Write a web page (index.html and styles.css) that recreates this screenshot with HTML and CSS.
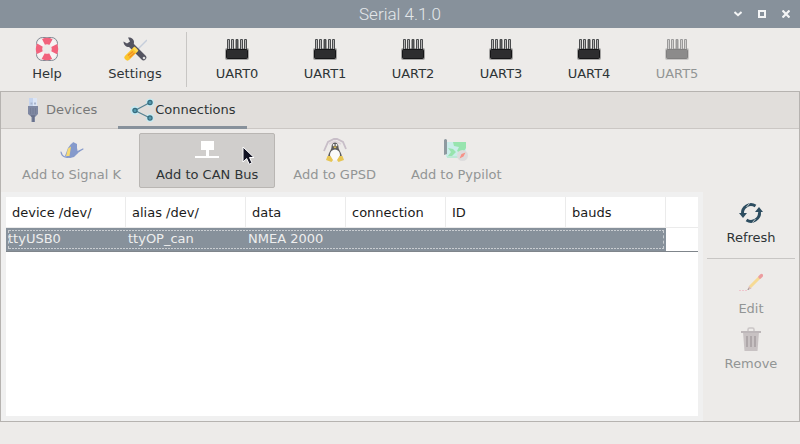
FILE: index.html
```html
<!DOCTYPE html>
<html lang="en">
<head>
<meta charset="utf-8">
<title>Serial 4.1.0</title>
<link rel="stylesheet" href="styles.css">
</head>
<body>
<svg class="defs" aria-hidden="true">
  <symbol id="uart" viewBox="0 0 24 24">
    <rect x="0" y="11" width="24" height="12" rx="2" fill="#1d1d1f" opacity=".35"/>
    <g fill="#b4b4b4" stroke="#4b4c4e" stroke-width="1">
      <path d="M2.500 13V2.500h2V13M6.500 13V2.500h2V13M15.500 13V2.500h2V13M19.500 13V2.500h2V13"/>
      <path fill="#555" d="M11 13V2.500h2V13"/>
    </g>
    <rect x="1.500" y="12.500" width="21" height="9" rx="1" fill="#2d2d2f" stroke="#151517"/>
  </symbol>
</svg>
<header class="titlebar">
  <h1>Serial 4.1.0</h1>
  <div class="window-buttons">
    <button aria-label="Minimize"><svg width="8" height="8" viewBox="0 0 8 8"><path d="M0.500 2L4 5.200L7.500 2" fill="none" stroke="#f4f5f6" stroke-width="2"/></svg></button>
    <button aria-label="Maximize"><svg width="8" height="8" viewBox="0 0 8 8"><path d="M1 1h6v6H1z" fill="none" stroke="#f4f5f6" stroke-width="2"/></svg></button>
    <button aria-label="Close"><svg width="8" height="8" viewBox="0 0 8 8"><path d="M.5.5l7 7M7.500.5l-7 7" stroke="#f4f5f6" stroke-width="2.200"/></svg></button>
  </div>
</header>
<nav class="toolbar main-tools">
  <button class="tool">
    <svg class="icon" viewBox="0 0 24 24"><rect x="1.500" y=".5" width="21" height="23" rx="6" fill="none" stroke="#838994"/><circle cx="12" cy="12" r="8" fill="none" stroke="#f6f4f4" stroke-width="6.500"/><circle cx="12" cy="12" r="8" fill="none" stroke="#f2637d" stroke-width="6.500" stroke-dasharray="7.800 4.766" stroke-dashoffset="3.900"/></svg>
    <span>Help</span>
  </button>
  <button class="tool">
    <svg class="icon" viewBox="0 0 24 24"><path d="M24 3L13 14" stroke="#c6cedb" stroke-width="1.400"/><path d="M8 8l12.500 12.500" stroke="#545460" stroke-width="5.500" stroke-linecap="round"/><path d="M5 .5C8 0 11 2 11 5c0 3-2 5-5 5C3 10 .5 8 .5 4.500L4 6.500l3-2z" fill="#545460"/><circle cx="21" cy="21" r="1.300" fill="#ddd"/><path d="M4.500 20.500l7-7" stroke="#fbc52c" stroke-width="6" stroke-linecap="round"/><path d="M10.500 10.500l4 4" stroke="#ffda55" stroke-width="2.500"/><path d="M5 18.500l5-4M6.500 20.500l5-4.500" stroke="#f28a24" stroke-width="1.300"/></svg>
    <span>Settings</span>
  </button>
  <span class="divider"></span>
  <button class="tool"><svg class="icon"><use href="#uart"/></svg><span>UART0</span></button>
  <button class="tool"><svg class="icon"><use href="#uart"/></svg><span>UART1</span></button>
  <button class="tool"><svg class="icon"><use href="#uart"/></svg><span>UART2</span></button>
  <button class="tool"><svg class="icon"><use href="#uart"/></svg><span>UART3</span></button>
  <button class="tool"><svg class="icon"><use href="#uart"/></svg><span>UART4</span></button>
  <button class="tool" disabled><svg class="icon"><use href="#uart"/></svg><span>UART5</span></button>
</nav>
<main class="notebook">
  <div class="tabs" role="tablist">
    <button class="tab" role="tab" aria-selected="false">
      <svg class="icon" viewBox="0 0 24 24"><path d="M8 0h8v9H8z" fill="#c5d4ee"/><path d="M12 0h4v9h-4z" fill="#dce5f5"/><path d="M9.500 4.500h2v2h-2zM13 4.500h2v2h-2z" fill="#a9b5cd"/><path d="M7 8h10v8l-3 3v5h-3.500v-5L7 16z" fill="#7f88a2"/><path d="M9.500 10v6M12 10v6M14.500 10v6" stroke="#727b94" stroke-width=".8"/><path d="M10 18h4M12.200 18v6" stroke="#68708a" stroke-width="1.600"/></svg>
      <span>Devices</span>
    </button>
    <button class="tab active" role="tab" aria-selected="true">
      <svg class="icon" viewBox="0 0 24 24"><g fill="#c6e9f1"><circle cx="5" cy="12.500" r="4.500"/><circle cx="20" cy="4.500" r="4"/><circle cx="20" cy="20" r="4"/></g><path d="M20 4.500L5 12.500L20 20" fill="none" stroke="#568292" stroke-width="1.200"/><g fill="#559bb0" stroke="#356a7c" stroke-width="1.200"><circle cx="5" cy="12.500" r="2.100"/><circle cx="20" cy="4.500" r="2.100"/><circle cx="20" cy="20" r="2.100"/></g></svg>
      <span>Connections</span>
    </button>
  </div>
  <div class="toolbar page-tools">
    <button class="tool" disabled>
      <svg class="icon" viewBox="0 0 24 24"><path d="M5 18L8 10l3-4 1.500-1L13 4l2 1 2 1v4l1 5-4 4-4 1z" fill="#1f4bb0"/><path d="M6 18L8 10.500l3-2L9.500 18z" fill="#ffc800"/><path d="M1 14c1 6 6 6 11 3.500C15 15 19 12.500 23 11 18 13 15 18 10 19 6 20 2 19 1 14z" fill="#1f4bb0" stroke="#1f4bb0" stroke-width="1.200" stroke-linejoin="round"/></svg>
      <span>Add to Signal K</span>
    </button>
    <button class="tool pressed">
      <svg class="icon" viewBox="0 0 24 24"><path d="M6 3h13v9h-5v6h10v2H0v-2h11v-6H6z" fill="#fff"/></svg>
      <span>Add to CAN Bus</span>
      <svg class="pointer" width="14" height="20" viewBox="0 0 14 20" aria-hidden="true"><path d="M1 1v15l3.700-3.500 2.500 5.700 2.800-1.300-2.500-5.400H12z" fill="#121323" stroke="#fff"/></svg>
    </button>
    <button class="tool" disabled>
      <svg class="icon strong" viewBox="0 0 24 24"><path d="M1 13L5 4l6-3h3l6 3 3 7" fill="none" stroke="#bfb3c0" stroke-width="1.800"/><path d="M6 6l6-3 6 3" fill="none" stroke="#ddd0da" stroke-width="1.500"/><path d="M8.500 9c0-6 7-6 7 0 0 3 3.500 6 3.500 11H5c0-5 3.500-8 3.500-11z" fill="#3a3a3d"/><ellipse cx="12" cy="17" rx="5" ry="5.500" fill="#fff"/><circle cx="10.700" cy="7" r="1" fill="#fff"/><circle cx="13.500" cy="7" r="1" fill="#fff"/><path d="M10 8.500h4l-2 2zM4.500 18h3l2.500 4-1.500 2-5.500-2zM19.500 18h-3L14 22l1.500 2 5.500-2z" fill="#e6bc2e"/></svg>
      <span>Add to GPSD</span>
    </button>
    <button class="tool" disabled>
      <svg class="icon" viewBox="0 0 24 24"><path d="M2 4h20v15H2z" fill="#a9efeb"/><path d="M9 4h13v6l-4 6-5-3 2-4-5-1zM4 10l5 1 3 3-4 4H4l3-4z" fill="#43df75"/><path d="M3 18h12v2H3z" fill="#8fe8c4"/><path d="M0 2q1.500-2 3 0v14l-3 1z" fill="#334b5a"/><circle cx="18.500" cy="17.500" r="5.500" fill="#cfcfd3"/><path d="M15.500 20.500l2-4.500 4-1.500-2 4z" fill="#ff3a28"/></svg>
      <span>Add to Pypilot</span>
    </button>
  </div>
  <div class="content">
    <section class="list-frame">
      <div class="list">
        <table>
          <colgroup><col class="wide"><col class="wide"><col class="narrow"><col class="narrow"><col class="wide"><col class="narrow"><col></colgroup>
          <thead><tr><th>device /dev/</th><th>alias /dev/</th><th>data</th><th>connection</th><th>ID</th><th>bauds</th><td></td></tr></thead>
          <tbody><tr><td>ttyUSB0</td><td>ttyOP_can</td><td>NMEA 2000</td><td></td><td></td><td></td><td class="filler"></td></tr></tbody>
        </table>
      </div>
    </section>
    <aside class="side-tools">
      <button class="tool">
        <svg class="icon" viewBox="0 0 24 24"><path d="M3.500 13a8.500 8.500 0 0 1 13-8M20.500 11a8.500 8.500 0 0 1-13 8" fill="none" stroke="#2d4d60" stroke-width="3"/><path d="M0 12h8l-4 5zM16 11h8l-4-5z" fill="#2d4d60"/><path d="M7.500 6l3-3.500M16.500 18l-3 3.500" stroke="#edebe9" stroke-width=".8"/></svg>
        <span>Refresh</span>
      </button>
      <span class="rule"></span>
      <button class="tool" disabled>
        <svg class="icon" viewBox="0 0 24 24"><path d="M11 15L21 5" stroke="#ffcb42" stroke-width="3"/><path d="M21 5l1.500-1.500" stroke="#ec5058" stroke-width="3.200" stroke-linecap="round"/><path d="M8.500 18l1.500-4 2.500 2.500z" fill="#c98a80"/><path d="M8.500 18l.7-1.700 1 1z" fill="#222"/><path d="M0 18.500h8" stroke="#f2a3b5" stroke-dasharray="2 1"/></svg>
        <span>Edit</span>
      </button>
      <button class="tool" disabled>
        <svg class="icon" viewBox="0 0 24 24"><path d="M9 4V2.500Q9 1 10.500 1h3Q15 1 15 2.500V4" fill="none" stroke="#aaa3a6" stroke-width="1.500"/><path d="M4 5h16l-1.500 19h-13z" fill="#a49a9e"/><path d="M2 4h20v2H2z" fill="#8f858a"/><path d="M8 9v11M12 9v11M16 9v11" stroke="#64595e" stroke-width="1.600"/></svg>
        <span>Remove</span>
      </button>
    </aside>
  </div>
</main>
<footer class="statusbar"></footer>
</body>
</html>
```
FILE: styles.css
```css
* { box-sizing: border-box; }

body {
  margin: 0;
  min-height: 100vh;
  display: flex;
  flex-direction: column;
  background: #edebe9;
  color: #2e3436;
  font: 13px/17px "DejaVu Sans", sans-serif;
}

button {
  margin: 0;
  border: 0;
  background: none;
  color: inherit;
  font: inherit;
}

.defs { position: absolute; width: 0; height: 0; }

.titlebar {
  display: grid;
  grid-template-columns: 1fr auto 1fr;
  align-items: center;
  height: 28px;
  background: #87919b;
}

.titlebar h1 {
  grid-column: 2;
  margin: 0;
  color: #e3e7ea;
  font: 300 17px/20px "Roboto Light", Roboto, sans-serif;
}

.window-buttons {
  display: flex;
  justify-content: flex-end;
  padding-right: 2px;
}

.window-buttons button {
  display: flex;
  padding: 8px;
}

.toolbar { display: flex; }

.tool {
  display: flex;
  flex-direction: column;
  align-items: center;
  gap: 4px;
  padding: 4px 16px;
  border: 1px solid transparent;
  border-radius: 2px;
  white-space: nowrap;
}

.tool:disabled { color: #929595; }
.tool:disabled .icon { opacity: 0.5; }
.tool:disabled .icon.strong { opacity: 0.8; }

.icon {
  flex: none;
  width: 24px;
  height: 24px;
}

.main-tools { padding: 4px 3px; }
.main-tools .tool { width: 88px; }

.divider {
  width: 1px;
  margin: 0 6px 0 7px;
  background: #c8c6c4;
}

.notebook {
  flex: 1;
  display: flex;
  flex-direction: column;
  border: 1px solid #b6b3b0;
}

.tabs {
  display: flex;
  height: 37px;
  padding-left: 8px;
  background: #e1dedb;
  border-bottom: 1px solid #cbc7c4;
}

.tab {
  display: flex;
  align-items: center;
  gap: 1px;
  height: 37px;
  padding: 3px 12px 2px;
  border-bottom: 3px solid transparent;
  color: #777878;
}

.tab.active {
  margin-left: 9px;
  padding-right: 11px;
  border-bottom-color: #87919b;
  color: #2e3436;
}

.page-tools {
  gap: 1px;
  padding: 4px;
}

.pressed {
  position: relative;
  background: #d0cecc;
  border-color: #b9b6b3;
}

.pointer {
  position: absolute;
  left: 102px;
  top: 12px;
}

.content {
  flex: 1;
  display: grid;
  grid-template-columns: 1fr 96px;
}

.list-frame {
  display: flex;
  padding: 5px;
  background: #f0f0f0;
}

.list {
  flex: 1;
  background: #fff;
}

table {
  width: 100%;
  table-layout: fixed;
  border-collapse: separate;
  border-spacing: 0;
}

.wide { width: 120px; }
.narrow { width: 100px; }

thead th,
thead td {
  height: 31px;
  padding: 1px 6px 0;
  border-bottom: 1px solid #ebebeb;
  color: #1a1a1a;
  font-weight: normal;
  text-align: left;
}

thead th { border-right: 1px solid #ebebeb; }

tbody td {
  position: relative;
  height: 24px;
  padding: 0 2px 2px;
  background: #87919b;
  border-bottom: 1px solid #7f858b;
  color: #eee;
}

tbody td::after {
  content: "";
  position: absolute;
  inset: 2px 0;
  background:
    repeating-linear-gradient(90deg, #c9cdd1 0 2px, transparent 2px 3px) top / 100% 1px no-repeat,
    repeating-linear-gradient(90deg, #c9cdd1 0 2px, transparent 2px 3px) bottom / 100% 1px no-repeat;
}

tbody td:first-child::after {
  left: 2px;
  border-left: 1px dashed #c9cdd1;
}

tbody td:nth-child(6)::after {
  right: 2px;
  border-right: 1px dashed #c9cdd1;
}

tbody .filler { background: #fff; }
tbody .filler::after { content: none; }

.side-tools {
  display: flex;
  flex-direction: column;
  padding: 4px;
}

.rule {
  height: 1px;
  margin: 7px 0 8px;
  background: #c8c6c4;
}

.statusbar { height: 22px; }
```
